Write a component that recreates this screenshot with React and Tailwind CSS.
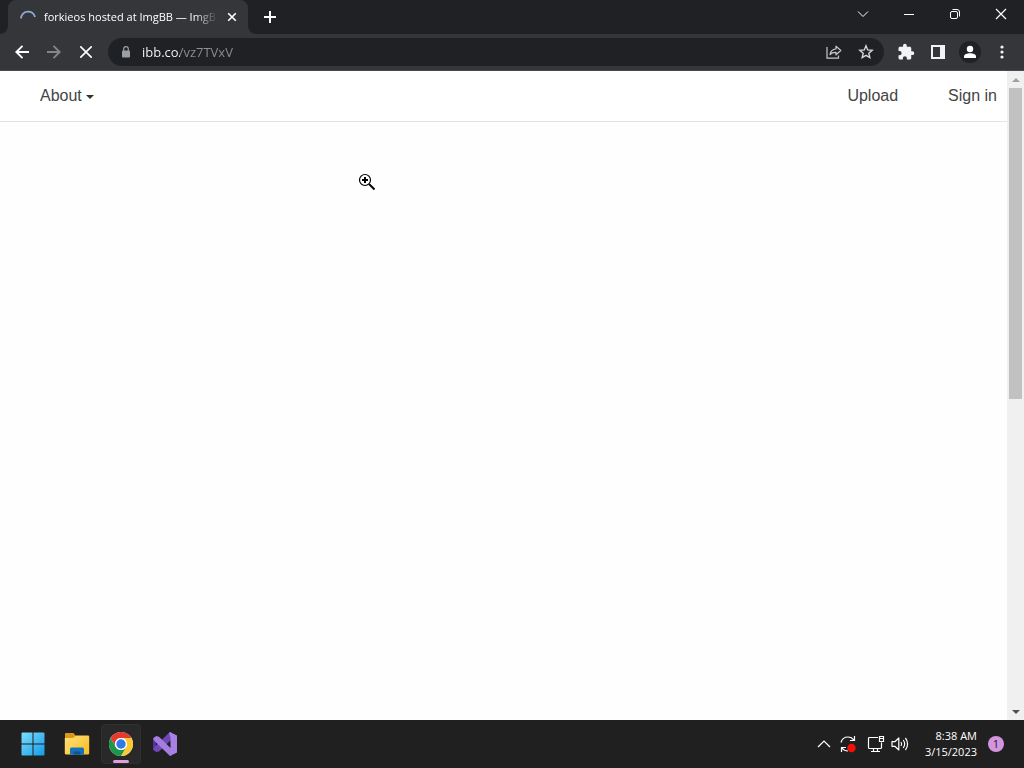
import React from "react";

function Spinner() {
  return (
    <svg width="16" height="16" viewBox="0 0 16 16" fill="none" stroke="#8fa9d4" strokeWidth="1.8" className="shrink-0">
      <path d="M1 9.5A7.1 7.1 0 0 1 15 8" />
    </svg>
  );
}

function BrowserTab() {
  return (
    <div className="relative flex h-[34px] w-60 items-center rounded-t-lg bg-[#35363a] pr-2 pl-3">
      <svg className="absolute bottom-0 -left-2" width="8" height="8" viewBox="0 0 8 8">
        <path d="M8 0v8H0A8 8 0 0 0 8 0Z" fill="#35363a" />
      </svg>
      <svg className="absolute -right-2 bottom-0" width="8" height="8" viewBox="0 0 8 8">
        <path d="M0 0v8h8A8 8 0 0 1 0 0Z" fill="#35363a" />
      </svg>
      <Spinner />
      <span className="mr-1.5 ml-2 min-w-0 flex-1 overflow-hidden text-[11px] leading-4 font-medium whitespace-nowrap text-white [mask-image:linear-gradient(to_right,black_86%,transparent)]">
        forkieos hosted at ImgBB — ImgBB
      </span>
      <button type="button" aria-label="Close tab" className="flex size-4 shrink-0 items-center justify-center">
        <svg width="10" height="10" viewBox="0 0 10 10" stroke="#fff" strokeWidth="1.6">
          <path d="M1.2 1.2l7.6 7.6M8.8 1.2L1.2 8.8" />
        </svg>
      </button>
    </div>
  );
}

function WindowButton({ label, children }) {
  return (
    <button type="button" aria-label={label} className="flex h-7 w-[46px] items-center justify-center">
      <svg width="12" height="12" viewBox="0 0 12 12" fill="none" stroke="#fff" strokeWidth="1">
        {children}
      </svg>
    </button>
  );
}

function TitleBar() {
  return (
    <div className="flex h-[34px] items-start bg-[#202124] pl-2">
      <BrowserTab />
      <button type="button" aria-label="New tab" className="ml-2 flex h-[34px] w-7 items-center justify-center">
        <svg width="12" height="12" viewBox="0 0 12 12" stroke="#fff" strokeWidth="2">
          <path d="M6 0v12M0 6h12" />
        </svg>
      </button>
      <div className="ml-auto flex">
        <WindowButton label="Search tabs">
          <path d="M1 3.5l5 5 5-5" />
        </WindowButton>
        <WindowButton label="Minimize">
          <path d="M1 6.5h10" />
        </WindowButton>
        <WindowButton label="Restore">
          <rect x="1.5" y="3.5" width="7" height="7" rx="1.5" />
          <path d="M3.5 1.5H8a2.5 2.5 0 0 1 2.5 2.5v4.5" />
        </WindowButton>
        <WindowButton label="Close">
          <path d="M1 1l10 10M11 1L1 11" strokeWidth="1.2" />
        </WindowButton>
      </div>
    </div>
  );
}

function ToolButton({ label, children }) {
  return (
    <button type="button" aria-label={label} className="flex size-8 shrink-0 items-center justify-center">
      {children}
    </button>
  );
}

function Toolbar() {
  return (
    <div className="flex h-[37px] items-center border-b border-[#4a4b4f] bg-[#35363a] px-1.5">
      <ToolButton label="Back">
        <svg width="14" height="14" viewBox="0 0 14 14" fill="none" stroke="#fff" strokeWidth="1.9">
          <path d="M14 7H1.5M7.5 .8L1.3 7l6.2 6.2" />
        </svg>
      </ToolButton>
      <ToolButton label="Forward">
        <svg width="14" height="14" viewBox="0 0 14 14" fill="none" stroke="#85868a" strokeWidth="1.9">
          <path d="M0 7h12.5M6.5 .8L12.7 7l-6.2 6.2" />
        </svg>
      </ToolButton>
      <ToolButton label="Stop loading">
        <svg width="12" height="12" viewBox="0 0 12 12" stroke="#fff" strokeWidth="1.6">
          <path d="M.3 .3l11.4 11.4M11.7 .3L.3 11.7" />
        </svg>
      </ToolButton>
      <div className="mx-1.5 flex h-7 min-w-0 flex-1 items-center rounded-full bg-[#202124] pr-0.5 pl-3">
        <svg width="12" height="12" viewBox="0 0 12 12" className="shrink-0">
          <rect x="2" y="4.5" width="8" height="7" rx="1" fill="#9aa0a6" />
          <path d="M3.7 5V3a2.3 2.3 0 0 1 4.6 0v2" fill="none" stroke="#9aa0a6" strokeWidth="1.2" />
        </svg>
        <input
          type="text"
          aria-label="Address"
          defaultValue="ibb.co/vz7TVxV"
          spellCheck="false"
          className="ml-2.5 h-7 min-w-0 flex-1 bg-[linear-gradient(to_right,#ffffff_38px,#8d9196_38px)] bg-clip-text text-[13px] font-medium text-transparent outline-none"
        />
        <ToolButton label="Share">
          <svg width="16" height="16" viewBox="0 0 16 16" fill="none" stroke="#c4c7cb" strokeWidth="1.2">
            <path d="M1 3v11.2h11.5V11.5" />
            <path d="M10 2.2l4.8 4.300L10 10.800V8.300c-2.800-.1-4.700.7-6 2.200.5-3.300 2.500-5.300 6-5.700V2.200Z" strokeLinejoin="round" />
          </svg>
        </ToolButton>
        <ToolButton label="Bookmark this page">
          <svg width="16" height="16" viewBox="0 0 16 16" fill="none" stroke="#d5d7da" strokeWidth="1.4">
            <path d="M8 1.8l1.700 4.100 4.500.4-3.400 2.900 1 4.400L8 11.300l-3.800 2.300 1-4.400L1.800 6.300l4.500-.4L8 1.800Z" />
          </svg>
        </ToolButton>
      </div>
      <ToolButton label="Extensions">
        <svg width="18" height="18" viewBox="0 0 24 24" fill="#f1f3f4">
          <path d="M20.500 11H19V7c0-1.100-.9-2-2-2h-4V3.500a2.500 2.500 0 0 0-5 0V5H4c-1.100 0-2 .9-2 2v3.800h1.500a2.700 2.700 0 0 1 0 5.400H2V20c0 1.100.9 2 2 2h3.800v-1.500a2.700 2.700 0 0 1 5.400 0V22H17c1.100 0 2-.9 2-2v-4h1.500a2.500 2.500 0 0 0 0-5Z" />
        </svg>
      </ToolButton>
      <ToolButton label="Side panel">
        <svg width="14" height="14" viewBox="0 0 14 14">
          <path fillRule="evenodd" d="M0 0h14v14H0ZM2 2v10h7V2Z" fill="#f1f3f4" />
        </svg>
      </ToolButton>
      <ToolButton label="Profile">
        <svg width="22" height="22" viewBox="0 0 22 22">
          <circle cx="11" cy="11" r="11" fill="#202124" />
          <circle cx="11" cy="8" r="3.200" fill="#fff" />
          <path d="M5 17v-1.600c0-2.100 3-3.200 6-3.200s6 1.100 6 3.200V17Z" fill="#fff" />
        </svg>
      </ToolButton>
      <ToolButton label="Menu">
        <svg width="4" height="14" viewBox="0 0 4 14" fill="#f1f3f4">
          <circle cx="2" cy="2" r="1.600" />
          <circle cx="2" cy="7" r="1.600" />
          <circle cx="2" cy="12" r="1.600" />
        </svg>
      </ToolButton>
    </div>
  );
}

function Scrollbar() {
  return (
    <div className="flex w-[17px] shrink-0 flex-col items-center bg-[#f0f0f0]">
      <button type="button" aria-label="Scroll up" className="flex h-[17px] w-full items-center justify-center">
        <svg width="8" height="4" viewBox="0 0 8 4">
          <path d="M0 4l4-4 4 4Z" fill="#a0a0a0" />
        </svg>
      </button>
      <div className="flex w-full flex-1 flex-col px-0.5">
        <div className="basis-[50.5%] bg-[#c1c1c1]" />
      </div>
      <button type="button" aria-label="Scroll down" className="flex h-[17px] w-full items-center justify-center">
        <svg width="8" height="4" viewBox="0 0 8 4">
          <path d="M0 0l4 4 4-4Z" fill="#505050" />
        </svg>
      </button>
    </div>
  );
}

function ZoomCursor() {
  return (
    <svg className="absolute top-[102px] left-[358px]" width="18" height="18" viewBox="0 0 18 18" fill="none" stroke="#000">
      <circle cx="7" cy="7" r="5.500" fill="#fff" strokeWidth="1.200" />
      <path d="M7 4v6M4 7h6" strokeWidth="2" />
      <path d="M11 11l5.500 5.500" strokeWidth="2" />
    </svg>
  );
}

function WebPage() {
  return (
    <div className="flex flex-1 bg-[#fefefe]">
      <main className="relative min-w-0 flex-1">
        <header className="flex h-[51px] items-center border-b border-[#e3e3e3] bg-white pr-2.5 pl-10 font-['Liberation_Sans',Arial,sans-serif] text-base text-[#444]">
          <button type="button" className="flex items-center gap-1">
            About
            <svg width="8" height="4" viewBox="0 0 8 4" className="mt-0.5">
              <path d="M0 0h8L4 4Z" fill="#333" />
            </svg>
          </button>
          <nav className="ml-auto flex gap-[50px]">
            <a href="#upload">Upload</a>
            <a href="#signin">Sign in</a>
          </nav>
        </header>
        <ZoomCursor />
      </main>
      <Scrollbar />
    </div>
  );
}

function WindowsLogo() {
  return (
    <svg width="24" height="24" viewBox="0 0 24 24">
      <defs>
        <linearGradient id="win" x1="0" y1="0" x2="24" y2="24" gradientUnits="userSpaceOnUse">
          <stop stopColor="#7ee0fb" />
          <stop offset="1" stopColor="#1199e8" />
        </linearGradient>
      </defs>
      <path fill="url(#win)" d="M1.500.5h10v11H.5v-10a1 1 0 0 1 1-1ZM12.500.5h10a1 1 0 0 1 1 1v10h-11ZM.5 12.500h11v11h-10a1 1 0 0 1-1-1ZM12.500 12.500h11v10a1 1 0 0 1-1 1h-10Z" />
    </svg>
  );
}

function FolderIcon() {
  return (
    <svg width="26" height="24" viewBox="0 0 26 24">
      <defs>
        <linearGradient id="folder" x1="0" y1="4" x2="20" y2="24" gradientUnits="userSpaceOnUse">
          <stop stopColor="#ffe07a" />
          <stop offset="1" stopColor="#f9c02c" />
        </linearGradient>
      </defs>
      <path d="M2 1h7.500L12 4h-1v4H1V2a1 1 0 0 1 1-1Z" fill="#d9981c" />
      <path d="M1 6h8l3-2.500h12a1.200 1.200 0 0 1 1.200 1.200v16.600A1.200 1.200 0 0 1 24 22.500H2A1.200 1.200 0 0 1 .8 21.300V6Z" fill="url(#folder)" />
      <path d="M6 22.500V17a1.500 1.500 0 0 1 1.500-1.500h11A1.500 1.500 0 0 1 20 17v5.500Z" fill="#1673b9" />
      <path d="M9.500 22.500v-2a1 1 0 0 1 1-1h5a1 1 0 0 1 1 1v2Z" fill="#0b5793" />
    </svg>
  );
}

function ChromeIcon() {
  return (
    <svg width="24" height="24" viewBox="0 0 48 48">
      <circle cx="24" cy="24" r="24" fill="#fff" />
      <path d="M3.200 12A24 24 0 0 1 44.800 12H24A12 12 0 0 0 13.600 30Z" fill="#e33b2e" />
      <path d="M44.800 12A24 24 0 0 1 24 48l10.400-18A12 12 0 0 0 24 12Z" fill="#fcc934" />
      <path d="M24 48A24 24 0 0 1 3.200 12l10.400 18a12 12 0 0 0 20.800 0Z" fill="#1e9648" />
      <circle cx="24" cy="24" r="12" fill="#fff" />
      <circle cx="24" cy="24" r="9.400" fill="#2f79e8" />
    </svg>
  );
}

function VisualStudioIcon() {
  return (
    <svg width="26" height="24" viewBox="0 0 26 24">
      <path d="M1 6.500L4 5v14l-3-1.500Z" fill="#52359a" />
      <path d="M1 17.500l3 2.500 3-.5L19 8V.3L17 .8 2.500 15Z" fill="#7047b5" />
      <path d="M1 6.500L4 4l3 .8L19 16.500v7L17 23 2.500 9Z" fill="#a57de2" />
      <path d="M18 0l7 3.500v17L18 24l-1-1 1.500-4.500v-13L17 1Z" fill="#a781e6" />
    </svg>
  );
}

function TaskButton({ label, children }) {
  return (
    <button type="button" aria-label={label} className="flex h-10 w-11 items-center justify-center">
      {children}
    </button>
  );
}

function Taskbar() {
  return (
    <footer className="flex h-12 items-center bg-[#202020] pr-5 pl-[11px] text-white">
      <TaskButton label="Start"><WindowsLogo /></TaskButton>
      <TaskButton label="File Explorer"><FolderIcon /></TaskButton>
      <TaskButton label="Google Chrome">
        <span className="relative flex size-10 items-center justify-center rounded border border-[#303030] bg-[#292929]">
          <ChromeIcon />
          <span className="absolute bottom-0 h-[3px] w-4 rounded-full bg-[#dda0df]" />
        </span>
      </TaskButton>
      <TaskButton label="Visual Studio"><VisualStudioIcon /></TaskButton>
      <div className="ml-auto flex items-center">
        <button type="button" aria-label="Show hidden icons" className="flex w-6 justify-center">
          <svg width="14" height="8" viewBox="0 0 14 8" fill="none" stroke="#fff" strokeWidth="1.200">
            <path d="M1 7l6-6 6 6" />
          </svg>
        </button>
        <button type="button" aria-label="Update required" className="flex w-6 justify-center">
          <svg width="18" height="18" viewBox="0 0 18 18" fill="none" stroke="#fff" strokeWidth="1.200">
            <path d="M2 7.500C3 4 5.700 2 9 2c2.500 0 4.600 1.200 6 3.200M15.500 1v4.500H11" />
            <path d="M2.500 17v-4.500H7M3 13c1.400 2 3.400 3 6 3" />
            <circle cx="12.500" cy="13" r="4.200" fill="#f01008" stroke="none" />
          </svg>
        </button>
        <button type="button" aria-label="Network" className="ml-1 flex w-6 justify-center">
          <svg width="18" height="18" viewBox="0 0 18 18" fill="none" stroke="#fff" strokeWidth="1.200">
            <path d="M11 2.500H2.500a1 1 0 0 0-1 1v9a1 1 0 0 0 1 1h11a1 1 0 0 0 1-1V7.500M6.500 13.500v3M10.500 13.500v3M4 16.500h9" />
            <path d="M12.500 1.500h4v5h-4ZM12.500 3.500h4" />
          </svg>
        </button>
        <button type="button" aria-label="Volume" className="flex w-6 justify-center">
          <svg width="18" height="16" viewBox="0 0 18 16" fill="none" stroke="#fff" strokeWidth="1.200">
            <path d="M1 5.700h2.800L7.800 2v12L3.800 10.300H1Z" strokeLinejoin="round" />
            <path d="M10 6c.8 1.200.8 2.800 0 4M12.200 4c1.800 2.400 1.800 5.600 0 8M14.400 2c2.900 3.500 2.900 8.500 0 12" />
          </svg>
        </button>
        <div className="ml-[13px] text-right text-[11px] leading-4 font-medium">
          <div>8:38 AM</div>
          <div>3/15/2023</div>
        </div>
        <button type="button" aria-label="1 notification" className="ml-[11px] flex size-4 items-center justify-center rounded-full bg-[#d394e0] text-[11px] leading-4 text-[#202020]">
          1
        </button>
      </div>
    </footer>
  );
}

export default function App() {
  return (
    <div className="flex min-h-screen flex-col font-['Open_Sans','Noto_Sans',sans-serif]">
      <TitleBar />
      <Toolbar />
      <WebPage />
      <Taskbar />
    </div>
  );
}
